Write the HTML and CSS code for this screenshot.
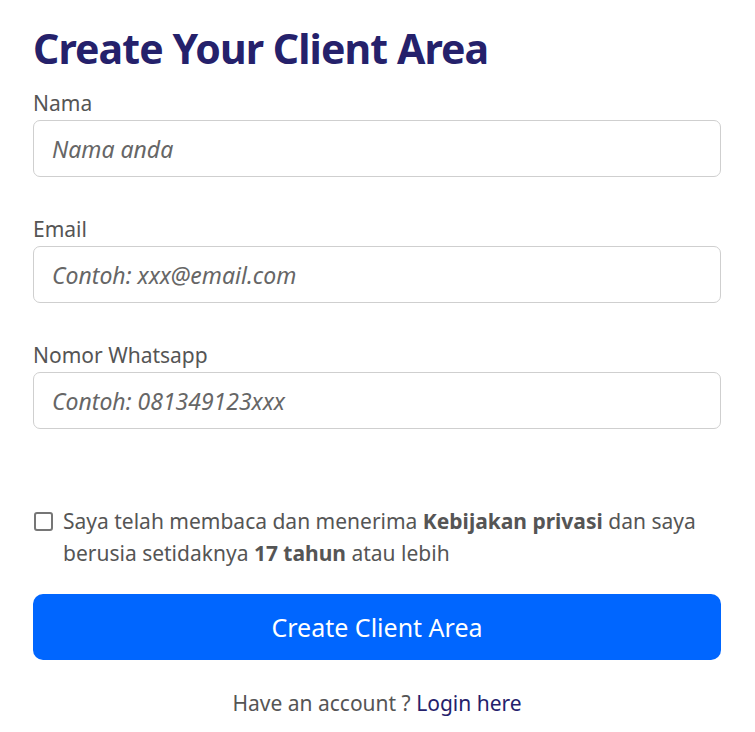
FILE: index.html
```html
<!DOCTYPE html>
<html lang="id">
<head>
<meta charset="utf-8">
<link rel="stylesheet" href="styles.css">
</head>
<body>
<main class="page">
  <h1 class="title">Create Your Client Area</h1>
  <form class="form">
    <div class="field">
      <label class="label">Nama</label>
      <input class="input" type="text" placeholder="Nama anda">
    </div>
    <div class="field">
      <label class="label">Email</label>
      <input class="input" type="text" placeholder="Contoh: xxx@email.com">
    </div>
    <div class="field">
      <label class="label">Nomor Whatsapp</label>
      <input class="input" type="text" placeholder="Contoh: 081349123xxx">
    </div>
    <label class="agree">
      <span class="box"></span>
      <span class="agree-text">Saya telah membaca dan menerima <b>Kebijakan privasi</b> dan saya berusia setidaknya <b>17 tahun</b> atau lebih</span>
    </label>
    <button class="btn" type="button">Create Client Area</button>
    <p class="login">Have an account ? <a class="link" href="#">Login here</a></p>
  </form>
</main>
</body>
</html>
```
FILE: styles.css
```css
html, body {
  margin: 0;
  padding: 0;
  background: #ffffff;
}
body {
  font-family: "Noto Sans", "Open Sans", sans-serif;
  color: #555555;
}
.page {
  padding: 24px 34px 0 33px;
}
.title {
  margin: 0 0 17px;
  font-size: 41px;
  line-height: 48px;
  font-weight: 700;
  color: #25216b;
  letter-spacing: -0.9px;
}
.form {
  display: flex;
  flex-direction: column;
}
.field {
  display: flex;
  flex-direction: column;
  gap: 3px;
  margin-bottom: 38px;
}
.label {
  font-size: 21px;
  line-height: 28px;
  color: #555555;
}
.input {
  box-sizing: border-box;
  height: 57px;
  width: 100%;
  border: 1px solid #cfcfcf;
  border-radius: 7px;
  padding: 0 18px;
  font-family: inherit;
  font-size: 23px;
  font-style: italic;
  outline: none;
}
.input::placeholder {
  color: #666666;
  font-style: italic;
}
.agree {
  display: flex;
  gap: 10px;
  align-items: flex-start;
  margin-top: 38px;
  font-size: 21px;
  line-height: 32px;
  color: #555555;
}
.box {
  flex: none;
  box-sizing: border-box;
  width: 19px;
  height: 19px;
  margin-top: 7px;
  margin-left: 1px;
  border: 2px solid #767676;
  border-radius: 3px;
}
.agree-text b {
  font-weight: 700;
}
.btn {
  margin-top: 25px;
  height: 66px;
  border: none;
  border-radius: 10px;
  background: #0066ff;
  color: #ffffff;
  font-family: inherit;
  font-size: 25px;
}
.login {
  margin: 29px 0 0;
  text-align: center;
  font-size: 21px;
  line-height: 28px;
  color: #555555;
}
.link {
  color: #25216b;
  text-decoration: none;
}
```
